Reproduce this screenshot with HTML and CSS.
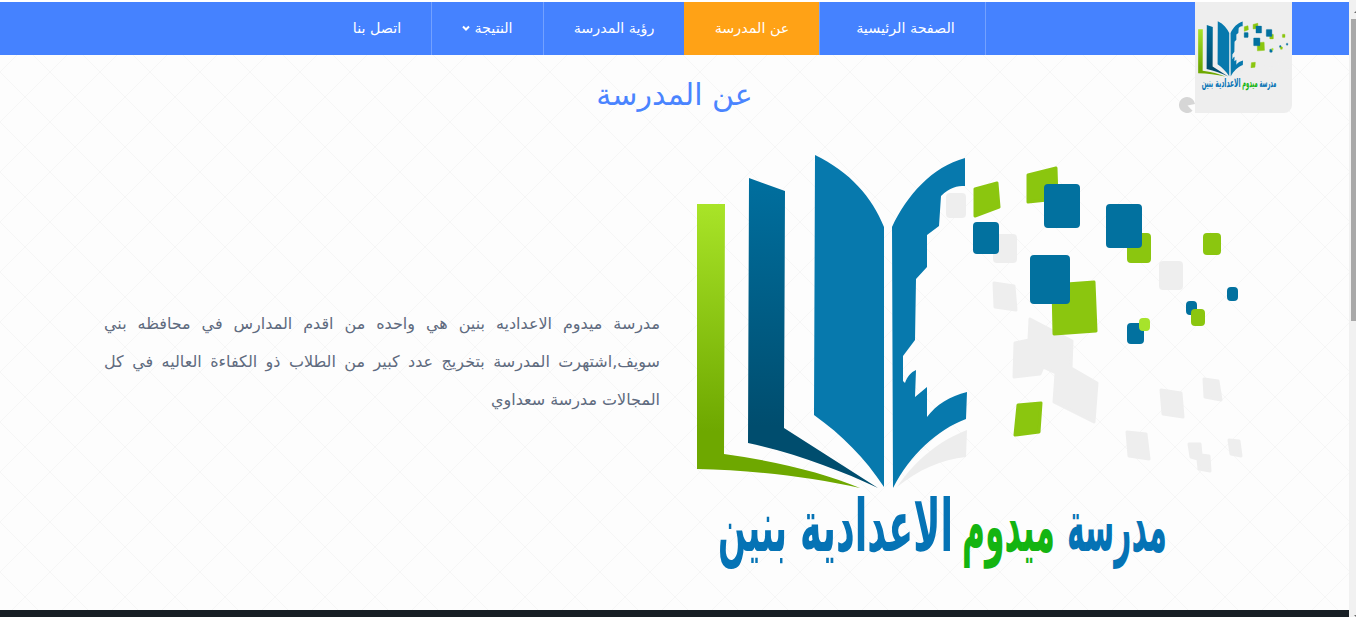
FILE: index.html
```html
<!DOCTYPE html>
<html lang="ar" dir="rtl">
<head>
<meta charset="UTF-8">
<meta name="viewport" content="width=device-width, initial-scale=1.0">
<title>عن المدرسة</title>
<link rel="stylesheet" href="styles.css">
</head>
<body>

<svg class="defs" width="0" height="0">
    <defs>
        <linearGradient id="gradGreen" x1="0" y1="0" x2="0" y2="1">
            <stop offset="0" stop-color="#a9e428"/>
            <stop offset="0.8" stop-color="#6ea800"/>
        </linearGradient>
        <linearGradient id="gradDark" x1="0" y1="0" x2="0" y2="1">
            <stop offset="0" stop-color="#006f9f"/>
            <stop offset="0.8" stop-color="#004d6e"/>
        </linearGradient>
        <symbol id="logo" viewBox="690 150 560 430">
            <!-- gray squares -->
            <g class="sq sq-gray">
                <rect x="947" y="194" width="18" height="23"/>
                <rect x="994" y="235" width="22" height="27"/>
                <rect x="1160" y="262" width="22" height="27"/>
                <polygon points="994,283 1014,286 1016,310 995,307"/>
                <polygon points="1030,319 1072,341 1071,368 1097,383 1094,422 1054,402 1056,373 1043,367 1040,374 1014,377 1015,343 1029,340"/>
                <polygon points="1161,390 1181,393 1183,417 1163,414"/>
                <polygon points="1204,379 1218,381 1221,400 1205,397"/>
                <polygon points="1127,432 1146,434 1149,459 1129,456"/>
                <polygon points="1189,444 1200,444 1201,455 1209,456 1210,471 1199,469 1198,459 1191,457"/>
                <polygon points="1229,440 1239,441 1241,456 1231,454"/>
            </g>
            <path class="swoosh" d="M897 487 C917 458 941 440 967 430 L966 457 C942 459 918 470 897 487 Z"/>
            <!-- book -->
            <path fill="url(#gradGreen)" d="M697 204 H725 L724 454 C775 461 825 473 860 488 C810 477 750 470 697 469 Z"/>
            <path fill="url(#gradDark)" d="M749 178 L785 191 L784 428 L878 488 C840 470 795 453 748 443 Z"/>
            <path class="book-page" d="M815 155 C850 172 872 197 884 227 L884 487 C865 458 842 435 814 415 Z"/>
            <path class="book-page" d="M892 227 C907 195 932 167 965 158 L965 186 C957 186 950 187 941 196 L939 226 L927 235 L927 267 L916 279 L915 340 L903 356 L903 381 L905 383 C907 377 911 372 916 370 L915 397 L927 387 L927 417 C936 405 950 396 967 392 L966 419 C937 430 910 455 893 488 Z"/>
            <!-- green squares -->
            <g class="sq sq-green">
                <polygon points="975,189 997,183 999,207 975,216"/>
                <polygon points="1028,175 1056,168 1057,199 1028,202"/>
                <rect x="1128" y="234" width="22" height="28"/>
                <rect x="1204" y="234" width="16" height="20"/>
                <polygon points="1053,285 1094,282 1096,331 1054,334"/>
                <polygon points="1018,405 1041,403 1039,432 1015,435"/>
            </g>
            <!-- blue squares -->
            <g class="sq sq-blue">
                <rect x="1045" y="185" width="34" height="42"/>
                <rect x="1107" y="205" width="34" height="42"/>
                <rect x="974" y="223" width="24" height="30"/>
                <rect x="1031" y="256" width="38" height="47"/>
                <rect x="1228" y="288" width="9" height="12"/>
                <rect x="1187" y="302" width="9" height="12"/>
                <rect x="1128" y="324" width="15" height="19"/>
            </g>
            <rect class="sq sq-lime" x="1140" y="319" width="9" height="11"/>
            <rect class="sq sq-green" x="1192" y="310" width="12" height="15"/>
            <!-- school name -->
            <text class="logo-word" x="1167" y="551" textLength="100" lengthAdjust="spacingAndGlyphs">مدرسة</text>
            <text class="logo-word logo-word-green" x="1055" y="551" textLength="93" lengthAdjust="spacingAndGlyphs">ميدوم</text>
            <text class="logo-word" x="953" y="551" textLength="153" lengthAdjust="spacingAndGlyphs">الاعدادية</text>
            <text class="logo-word" x="787" y="551" textLength="69" lengthAdjust="spacingAndGlyphs">بنين</text>
        </symbol>
    </defs>
</svg>

<div class="page">
    <nav class="navbar">
        <a href="#" class="brand">
            <svg class="brand-logo"><use href="#logo"/></svg>
        </a>
        <svg class="loader" viewBox="0 0 16 16"><path d="M8 0 A8 8 0 1 0 13.5 13.8 L8.5 8.5 L16 7 A8 8 0 0 0 8 0 Z"/></svg>
        <ul class="menu">
            <li class="item-home"><a href="#">الصفحة الرئيسية</a></li>
            <li class="item-about active"><a href="#">عن المدرسة</a></li>
            <li class="item-vision"><a href="#">رؤية المدرسة</a></li>
            <li class="item-result">
                <a href="#">النتيجة
                    <svg class="caret" viewBox="0 0 8 6"><path d="M1 1.5 L4 4.5 L7 1.5"/></svg>
                </a>
            </li>
            <li class="item-contact"><a href="#">اتصل بنا</a></li>
        </ul>
    </nav>

    <main class="about">
        <h1>عن المدرسة</h1>
        <div class="about-row">
            <svg class="about-logo"><use href="#logo"/></svg>
            <p>مدرسة ميدوم الاعداديه بنين هي واحده من اقدم المدارس في محافظه بني سويف,اشتهرت المدرسة بتخريج عدد كبير من الطلاب ذو الكفاءة العاليه في كل المجالات مدرسة سعداوي</p>
        </div>
    </main>

    <footer class="footer"></footer>
</div>

<div class="scrollbar">
    <span class="arrow-up"></span>
    <span class="thumb"></span>
    <span class="arrow-down"></span>
</div>

</body>
</html>
```

FILE: styles.css
```css
html, body {
    height: 100%;
    margin: 0;
    overflow: hidden;
}

body {
    display: flex;
    direction: ltr;
    font-family: "DejaVu Sans", sans-serif;
    background-color: #ffffff;
}

.defs {
    position: absolute;
}

.page {
    flex: 1;
    min-width: 0;
    display: flex;
    flex-direction: column;
    direction: rtl;
    padding-top: 2px;
}

/* navbar */
.navbar {
    position: relative;
    z-index: 2;
    height: 53px;
    flex-shrink: 0;
    padding-right: 363px;
    background-color: #4582ff;
}

.brand {
    position: absolute;
    top: 0;
    right: 57px;
    width: 97px;
    height: 111px;
    padding-top: 18px;
    box-sizing: border-box;
    display: flex;
    justify-content: center;
    background-color: #eeeeee;
    border-bottom-right-radius: 8px;
}

.brand-logo {
    width: 93px;
    height: 72px;
}

.loader {
    position: absolute;
    top: 95px;
    right: 154px;
    width: 16px;
    height: 16px;
    fill: #d6d6d6;
}

.menu {
    display: flex;
    height: 100%;
    margin: 0;
    padding: 0;
    list-style: none;
}

.menu li {
    box-sizing: border-box;
    border-left: 1px solid rgba(255, 255, 255, 0.25);
}

.menu li a {
    display: flex;
    box-sizing: border-box;
    height: 100%;
    padding-bottom: 2px;
    align-items: center;
    justify-content: center;
    gap: 4px;
    color: #ffffff;
    font-size: 14.3px;
    text-decoration: none;
}

.menu .item-home { width: 167px; border-right: 1px solid rgba(255, 255, 255, 0.25); }
.menu .item-home a { padding-left: 6px; }
.menu .item-about { width: 135px; }
.menu .item-vision { width: 141px; }
.menu .item-result { width: 112px; }
.menu .item-contact { width: 108px; border-left: none; }

.menu .active {
    background-color: #ffa216;
    border-left-color: transparent;
}

.caret {
    width: 8px;
    height: 6px;
    fill: none;
    stroke: #ffffff;
    stroke-width: 2;
}

/* about section */
.about {
    flex: 1;
    min-height: 0;
    background-color: #fdfdfd;
    background-image:
        linear-gradient(45deg, transparent 49.4%, #f6f6f6 49.6%, #f6f6f6 50.4%, transparent 50.6%),
        linear-gradient(135deg, transparent 49.4%, #f6f6f6 49.6%, #f6f6f6 50.4%, transparent 50.6%);
    background-size: 50px 50px;
    background-position: 0 17px;
    overflow: hidden;
}

.about h1 {
    margin: 19px 0 0;
    color: #4a84ff;
    font-size: 30px;
    font-weight: normal;
    line-height: 42px;
    text-align: center;
}

.about-row {
    display: flex;
    align-items: center;
    gap: 30px;
    padding: 0 99px 0 104px;
    margin-top: 34px;
}

.about-logo {
    flex-shrink: 0;
    width: 560px;
    height: 430px;
}

.about-row p {
    flex: 1;
    margin: 0 0 6px;
    color: #5f6b7f;
    font-size: 16px;
    line-height: 38px;
    text-align: justify;
}

/* logo parts */
.book-page {
    fill: #0779ad;
}

.swoosh {
    fill: #ededed;
}

.sq {
    stroke-width: 2;
    stroke-linejoin: round;
}

.sq polygon {
    stroke-width: 3;
}

.sq rect,
rect.sq {
    rx: 3px;
}

.sq-gray {
    fill: #eeeeee;
    stroke: #eeeeee;
}

.sq-green {
    fill: #8bc60f;
    stroke: #8bc60f;
}

.sq-blue {
    fill: #02719f;
    stroke: #02719f;
}

.sq-lime {
    fill: #a7e32b;
    stroke: #a7e32b;
}

.logo-word {
    fill: #0573b5;
    font-family: "DejaVu Sans", sans-serif;
    font-size: 72px;
    font-weight: bold;
}

.logo-word-green {
    fill: #14b411;
}

.footer {
    height: 7px;
    flex-shrink: 0;
    background-color: #171e24;
}

/* the window scrollbar, its right edge is cut off in the picture */
.scrollbar {
    position: relative;
    width: 7px;
    flex-shrink: 0;
    overflow: hidden;
    background-color: #f1f1f1;
}

.thumb {
    position: absolute;
    top: 19px;
    left: 2px;
    width: 5px;
    height: 302px;
    background-color: #a8a8a8;
}

.arrow-up,
.arrow-down {
    position: absolute;
    left: 5px;
    border-left: 3px solid transparent;
    border-right: 3px solid transparent;
}

.arrow-up {
    top: 10px;
    border-bottom: 3px solid #6b6b6b;
}

.arrow-down {
    top: 615px;
    border-top: 3px solid #6b6b6b;
}
```
